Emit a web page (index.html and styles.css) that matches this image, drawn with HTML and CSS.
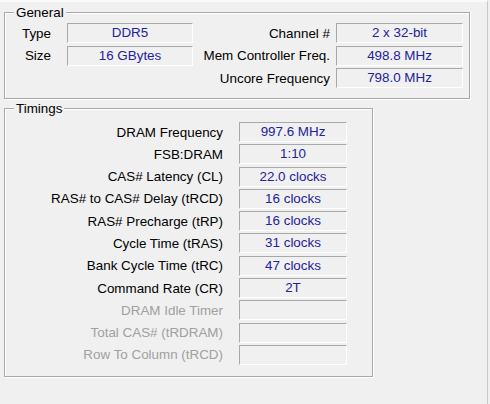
FILE: index.html
```html
<!DOCTYPE html>
<html lang="en">
<head>
    <meta charset="UTF-8">
    <title>Memory</title>
    <link rel="stylesheet" href="styles.css">
</head>
<body>
    <div class="panel">
        <div class="group general">
            <div class="group-title">General</div>
            <div class="grid general-grid">
                <div class="label">Type</div>
                <div class="field">DDR5</div>
                <div class="label">Channel #</div>
                <div class="field">2 x 32-bit</div>

                <div class="label">Size</div>
                <div class="field">16 GBytes</div>
                <div class="label">Mem Controller Freq.</div>
                <div class="field">498.8 MHz</div>

                <div class="label"></div>
                <div class="spacer"></div>
                <div class="label">Uncore Frequency</div>
                <div class="field">798.0 MHz</div>
            </div>
        </div>

        <div class="group timings">
            <div class="group-title">Timings</div>
            <div class="grid timings-grid">
                <div class="label">DRAM Frequency</div>
                <div class="field">997.6 MHz</div>
                <div class="label">FSB:DRAM</div>
                <div class="field">1:10</div>
                <div class="label">CAS# Latency (CL)</div>
                <div class="field">22.0 clocks</div>
                <div class="label">RAS# to CAS# Delay (tRCD)</div>
                <div class="field">16 clocks</div>
                <div class="label">RAS# Precharge (tRP)</div>
                <div class="field">16 clocks</div>
                <div class="label">Cycle Time (tRAS)</div>
                <div class="field">31 clocks</div>
                <div class="label">Bank Cycle Time (tRC)</div>
                <div class="field">47 clocks</div>
                <div class="label">Command Rate (CR)</div>
                <div class="field">2T</div>
                <div class="label disabled">DRAM Idle Timer</div>
                <div class="field"></div>
                <div class="label disabled">Total CAS# (tRDRAM)</div>
                <div class="field"></div>
                <div class="label disabled">Row To Column (tRCD)</div>
                <div class="field"></div>
            </div>
        </div>
    </div>
</body>
</html>
```

FILE: styles.css
```css
html, body {
    margin: 0;
    padding: 0;
}
body {
    width: 490px;
    height: 404px;
    background-color: #f0f0f0;
    font-family: "Liberation Sans", Arial, sans-serif;
    font-size: 13.4px;
    color: #000;
    overflow: hidden;
}
.panel {
    box-sizing: border-box;
    height: 404px;
    width: 488px;
    padding: 10px 0 0 4px;
    border-top: 2px solid #fafafa;
    border-right: 1px solid #c8c8c8;
}
.group {
    position: relative;
    border: 1px solid #a8a8a8;
    box-shadow: 1px 1px 0 #fff, inset 1px 1px 0 #fff;
}
.group-title {
    position: absolute;
    top: -8px;
    left: 9px;
    padding: 0 2px;
    line-height: 15px;
    background-color: #f0f0f0;
}
.general {
    width: 464px;
    padding: 10px 0;
}
.timings {
    width: 367px;
    margin-top: 9px;
    padding: 13px 0 11px;
}
.grid {
    display: grid;
    align-items: center;
}
.general-grid {
    grid-template-columns: 62px 126px 143px 127px;
    grid-auto-rows: 20px;
    row-gap: 2.5px;
}
.timings-grid {
    grid-template-columns: 234px 108px;
    grid-auto-rows: 20px;
    row-gap: 2.3px;
}
.label {
    text-align: right;
    white-space: nowrap;
}
.general-grid .label:nth-child(4n+1) {
    padding-right: 16px;
}
.general-grid .label:nth-child(4n+3) {
    padding-right: 6px;
}
.timings-grid .label {
    padding-right: 16px;
}
.label.disabled {
    color: #a0a0a0;
}
.field {
    box-sizing: border-box;
    height: 20px;
    line-height: 18px;
    text-align: center;
    color: #22229a;
    border-top: 1px solid #a8a8a8;
    border-left: 1px solid #a8a8a8;
    border-bottom: 1px solid #fff;
    border-right: 1px solid #fff;
    white-space: nowrap;
}
```
